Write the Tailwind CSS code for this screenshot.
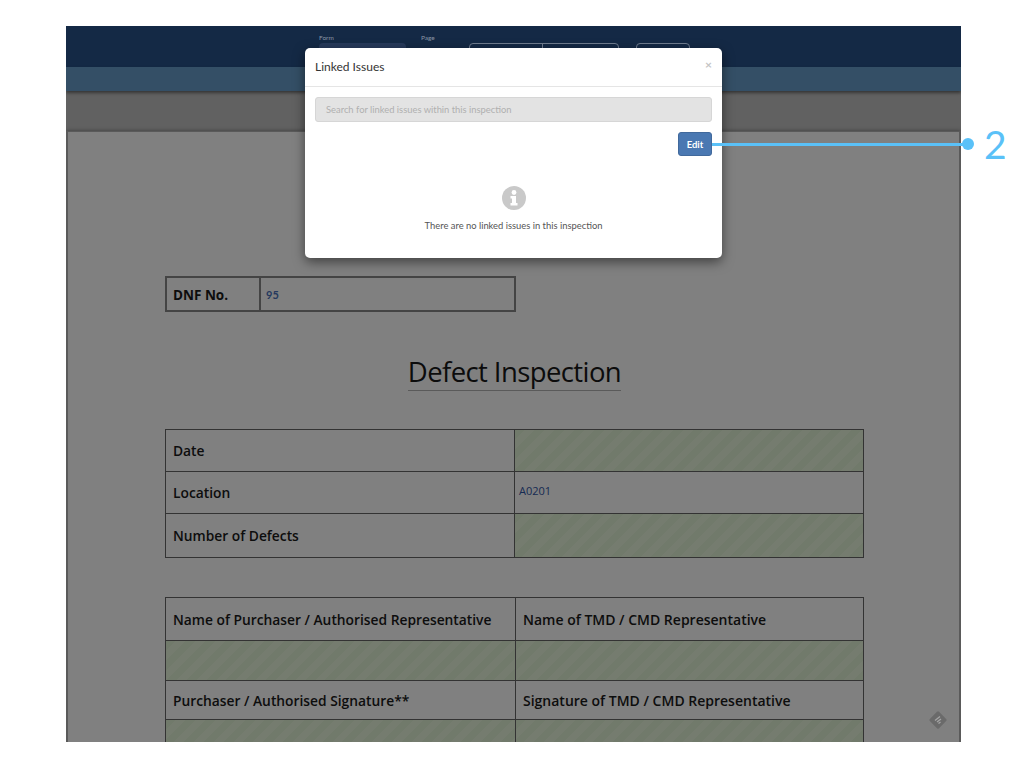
<!DOCTYPE html>
<html><head><meta charset="utf-8">
<script src="https://cdn.jsdelivr.net/npm/@tailwindcss/browser@4"></script>
</head>
<body class="bg-white">
<div class="relative w-[1024px] h-[768px] overflow-hidden pt-[26px] pl-[66px] font-['Lato',sans-serif]">
  <div class="relative w-[895px] h-[716px] overflow-hidden flex flex-col bg-[#616161]">
    <header class="h-[41px] shrink-0 bg-[#142945] flex items-start pl-[253px] pt-[8px] text-[#8b96a6] text-[6.5px]">
      <div class="w-[102px]"><div class="leading-[8px]">Form</div><div class="mt-[1px] w-[87px] h-[12px] rounded-sm bg-[#26395a]"></div></div>
      <div class="w-[48px]"><div class="leading-[8px]">Page</div></div>
      <div class="mt-[9px] w-[150px] h-[12px] rounded-sm border border-[#6f7c8f] flex"><div class="w-[73px] border-r border-[#6f7c8f]"></div></div>
      <div class="ml-[17px] mt-[9px] w-[54px] h-[12px] rounded-sm border border-[#6f7c8f]"></div>
    </header>
    <div class="h-[24px] shrink-0 bg-[#344f66] shadow-[0_2px_3px_rgba(0,0,0,0.45)] relative"></div>
    <div class="h-[40px] shrink-0"></div>
    <main class="flex-1 bg-[#808080] border-x-2 border-t border-[#5a5a5a] shadow-[0_0_4px_rgba(0,0,0,0.4)] pl-[97px] pt-[144px] font-['Open_Sans',sans-serif]">
      <div class="w-[351px] h-[36px] border-2 border-[#444] flex items-center">
        <div class="w-[94px] h-full border-r-2 border-[#444] pl-[6px] pt-[2px] flex items-center text-[13.5px] font-bold text-[#0d0d0d]">DNF No.</div>
        <div class="pl-[5px] pt-[2px] text-[11px] font-['Lato',sans-serif] font-bold text-[#25395e]">95</div>
      </div>
      <h1 class="mt-[42px] h-[36px] w-[699px] flex justify-center text-[#0c0c0c] text-[27.5px] leading-[36px]"><span class="border-b border-[#5a5a5a] tracking-[-0.6px] h-[37px]">Defect Inspection</span></h1>
      <div class="mt-[39px] w-[699px] border border-[#333] grid grid-cols-[348px_1fr] grid-rows-[41px_41px_43px] gap-px bg-[#333]">
        <div class="bg-[#808080] flex items-center pl-[7px] pt-[2px] text-[13.8px] font-semibold text-[#0d0d0d]">Date</div>
        <div class="bg-[repeating-linear-gradient(135deg,#717a6b_0,#717a6b_7px,#757c6f_7px,#757c6f_14px)]"></div>
        <div class="bg-[#808080] flex items-center pl-[7px] pt-[2px] text-[13.8px] font-semibold text-[#0d0d0d]">Location</div>
        <div class="bg-[#808080] pl-[4px] pt-[11px] text-[11px] leading-[16px] text-[#152a52]">A0201</div>
        <div class="bg-[#808080] flex items-center pl-[7px] pt-[2px] text-[13.8px] font-semibold text-[#0d0d0d]">Number of Defects</div>
        <div class="bg-[repeating-linear-gradient(135deg,#717a6b_0,#717a6b_7px,#757c6f_7px,#757c6f_14px)]"></div>
      </div>
      <div class="mt-[39px] w-[699px] border border-[#333] grid grid-cols-[349px_1fr] grid-rows-[42px_39px_38px_40px] gap-px bg-[#333]">
        <div class="bg-[#808080] flex items-center pl-[7px] pt-[2px] text-[13.8px] font-semibold text-[#0d0d0d] whitespace-nowrap">Name of Purchaser / Authorised Representative</div>
        <div class="bg-[#808080] flex items-center pl-[7px] pt-[1px] text-[14px] font-semibold text-[#0d0d0d] whitespace-nowrap">Name of TMD / CMD Representative</div>
        <div class="bg-[repeating-linear-gradient(135deg,#717a6b_0,#717a6b_7px,#757c6f_7px,#757c6f_14px)]"></div>
        <div class="bg-[repeating-linear-gradient(135deg,#717a6b_0,#717a6b_7px,#757c6f_7px,#757c6f_14px)]"></div>
        <div class="bg-[#808080] flex items-center pl-[7px] pt-[2px] text-[13.8px] font-semibold text-[#0d0d0d] whitespace-nowrap">Purchaser / Authorised Signature**</div>
        <div class="bg-[#808080] flex items-center pl-[7px] pt-[1px] text-[14px] font-semibold text-[#0d0d0d] whitespace-nowrap">Signature of TMD / CMD Representative</div>
        <div class="bg-[repeating-linear-gradient(135deg,#717a6b_0,#717a6b_7px,#757c6f_7px,#757c6f_14px)]"></div>
        <div class="bg-[repeating-linear-gradient(135deg,#717a6b_0,#717a6b_7px,#757c6f_7px,#757c6f_14px)]"></div>
      </div>
    </main>
    <svg class="absolute left-[863px] top-[685px]" width="18" height="18" viewBox="0 0 18 18">
      <rect x="2.5" y="2.5" width="13" height="13" rx="1.5" transform="rotate(45 9 9)" fill="#6a6a6a"/>
      <path d="M6 9.5l5-4M8 11l4-3M9.5 12.5l2-1.6" stroke="#a5a5a5" stroke-width="1.3" fill="none"/>
    </svg>
  </div>

  <section class="absolute z-10 left-[305px] top-[48px] w-[417px] h-[210px] bg-white rounded-[5px] shadow-[0_4px_12px_rgba(0,0,0,0.5)] text-[#333]">
    <div class="h-[39px] border-b border-[#e5e5e5] px-[10px] flex items-center justify-between">
      <span class="text-[12px] text-[#333]">Linked Issues</span>
      <span class="text-[#c4c4c4] text-[12px] font-bold leading-none -mt-[4px]">×</span>
    </div>
    <div class="px-[10px] pt-[10px]">
      <div class="h-[25px] rounded-[3px] bg-[#e3e3e3] border border-[#d6d6d6] flex items-center pl-[10px] pt-[1px] text-[9.4px] text-[#b0b0b0]">Search for linked issues within this inspection</div>
      <div class="mt-[10px] flex justify-end">
        <button class="w-[34px] h-[24px] rounded-[3px] bg-[#4a78b2] border border-[#41699c] pt-[2px] text-white text-[9.5px] font-bold">Edit</button>
      </div>
      <div class="mt-[30px] flex flex-col items-center">
        <svg width="24" height="24" viewBox="0 0 24 24">
          <circle cx="12" cy="12" r="12" fill="#c9c9c9"/>
          <circle cx="12" cy="6.5" r="2.4" fill="#fff"/>
          <path d="M8.5 10h5.5v7h1.5v2.5h-7V17H10v-4.5H8.5z" fill="#fff"/>
        </svg>
        <div class="mt-[9px] text-[9.4px] leading-[14px] text-[#555]">There are no linked issues in this inspection</div>
      </div>
    </div>
  </section>

  <div class="absolute left-[712px] top-[143px] w-[256px] h-[3px] bg-[#5ac1f8] z-10"></div>
  <div class="absolute left-[962px] top-[138px] w-[12px] h-[12px] rounded-full bg-[#5ac1f8]"></div>
  <div class="absolute left-[984px] top-[121px] text-[#5ac1f8] text-[39px] leading-[46px] font-normal">2</div>
</div>
</body></html>
